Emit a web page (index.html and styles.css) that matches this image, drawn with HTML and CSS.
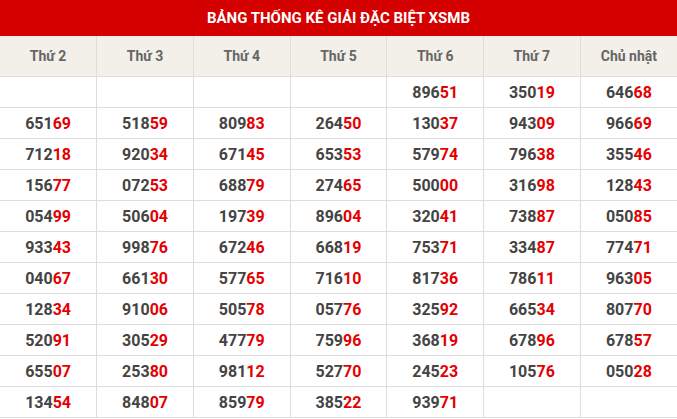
FILE: index.html
```html
<!DOCTYPE html>
<html>
<head>
<meta charset="utf-8">
<link rel="stylesheet" href="styles.css">
</head>
<body>
<div class="box">
  <div class="title">BẢNG THỐNG KÊ GIẢI ĐẶC BIỆT XSMB</div>
  <table class="stats">
    <thead>
      <tr><th>Thứ 2</th><th>Thứ 3</th><th>Thứ 4</th><th>Thứ 5</th><th>Thứ 6</th><th>Thứ 7</th><th>Chủ nhật</th></tr>
    </thead>
    <tbody>
      <tr><td></td><td></td><td></td><td></td><td>896<b>51</b></td><td>350<b>19</b></td><td>646<b>68</b></td></tr>
      <tr><td>651<b>69</b></td><td>518<b>59</b></td><td>809<b>83</b></td><td>264<b>50</b></td><td>130<b>37</b></td><td>943<b>09</b></td><td>966<b>69</b></td></tr>
      <tr><td>712<b>18</b></td><td>920<b>34</b></td><td>671<b>45</b></td><td>653<b>53</b></td><td>579<b>74</b></td><td>796<b>38</b></td><td>355<b>46</b></td></tr>
      <tr><td>156<b>77</b></td><td>072<b>53</b></td><td>688<b>79</b></td><td>274<b>65</b></td><td>500<b>00</b></td><td>316<b>98</b></td><td>128<b>43</b></td></tr>
      <tr><td>054<b>99</b></td><td>506<b>04</b></td><td>197<b>39</b></td><td>896<b>04</b></td><td>320<b>41</b></td><td>738<b>87</b></td><td>050<b>85</b></td></tr>
      <tr><td>933<b>43</b></td><td>998<b>76</b></td><td>672<b>46</b></td><td>668<b>19</b></td><td>753<b>71</b></td><td>334<b>87</b></td><td>774<b>71</b></td></tr>
      <tr><td>040<b>67</b></td><td>661<b>30</b></td><td>577<b>65</b></td><td>716<b>10</b></td><td>817<b>36</b></td><td>786<b>11</b></td><td>963<b>05</b></td></tr>
      <tr><td>128<b>34</b></td><td>910<b>06</b></td><td>505<b>78</b></td><td>057<b>76</b></td><td>325<b>92</b></td><td>665<b>34</b></td><td>807<b>70</b></td></tr>
      <tr><td>520<b>91</b></td><td>305<b>29</b></td><td>477<b>79</b></td><td>759<b>96</b></td><td>368<b>19</b></td><td>678<b>96</b></td><td>678<b>57</b></td></tr>
      <tr><td>655<b>07</b></td><td>253<b>80</b></td><td>981<b>12</b></td><td>527<b>70</b></td><td>245<b>23</b></td><td>105<b>76</b></td><td>050<b>28</b></td></tr>
      <tr><td>134<b>54</b></td><td>848<b>07</b></td><td>859<b>79</b></td><td>385<b>22</b></td><td>939<b>71</b></td><td></td><td></td></tr>
    </tbody>
  </table>
</div>
</body>
</html>
```
FILE: styles.css
```css
html, body {
  margin: 0;
  padding: 0;
  background: #fff;
}
.box {
  width: 677px;
  font-family: Roboto, "Liberation Sans", Arial, sans-serif;
}
.title {
  height: 36px;
  background: #d50000;
  color: #fff;
  font-weight: 700;
  font-size: 15px;
  line-height: 36px;
  text-align: center;
}
.stats {
  width: 677px;
  border-collapse: collapse;
  table-layout: fixed;
}
.stats th {
  height: 40px;
  padding: 0;
  background: #f3efe9;
  color: #666;
  font-size: 14px;
  font-weight: 700;
  text-align: center;
  border-left: 1px solid #ddd;
  border-bottom: 1px solid #ddd;
}
.stats td {
  height: 30px;
  padding: 0;
  color: #444;
  font-size: 16px;
  font-weight: 700;
  text-align: center;
  border-left: 1px solid #ddd;
  border-bottom: 1px solid #ddd;
}
.stats th:first-child, .stats td:first-child {
  border-left: none;
}
.stats td b {
  color: #e50000;
  font-weight: 700;
}
```
